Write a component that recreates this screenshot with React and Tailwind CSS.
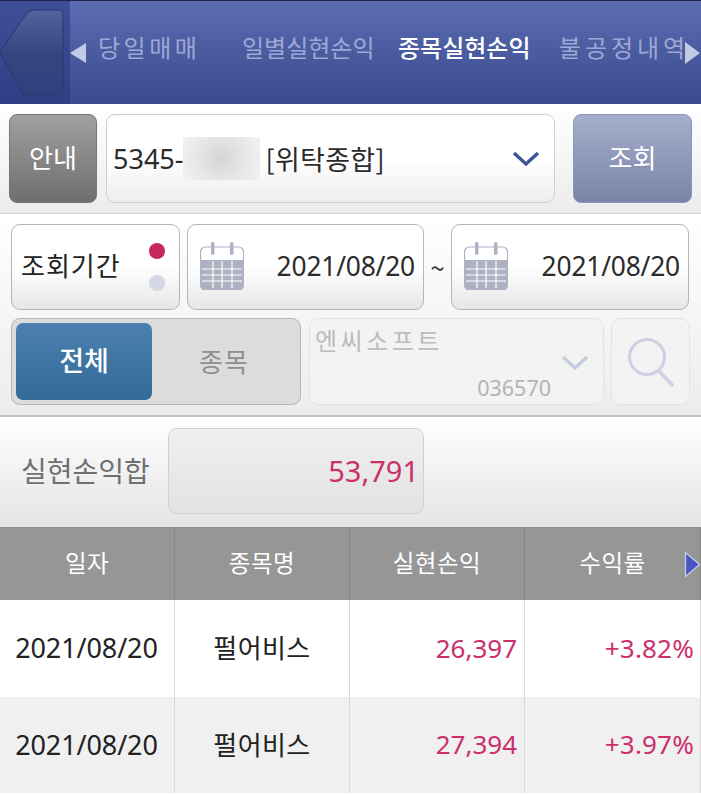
const KR = { fontFamily: '"Noto Sans CJK KR", "Noto Sans", sans-serif' };
const LATIN = { fontFamily: '"Noto Sans", sans-serif' };

function Calendar() {
  return (
    <svg width="44" height="48" viewBox="0 0 44 48" className="shrink-0">
      <rect x="0.5" y="5" width="43" height="43" rx="5" fill="#fff" stroke="#aeb1c1" strokeWidth="1.2" />
      <path d="M0 18V43a5 5 0 0 0 5 5H39a5 5 0 0 0 5-5V18Z" fill="#aeb1c1" />
      <rect x="11" y="0" width="3.5" height="13" rx="1.7" fill="#aeb1c1" />
      <rect x="30" y="0" width="3.5" height="13" rx="1.7" fill="#aeb1c1" />
      <path d="M2 27H42M2 33H42M2 39H42M13 19V46M22 19V46M32 19V46" stroke="#fff" strokeWidth="1.2" />
    </svg>
  );
}

function DateBox({ w }) {
  return (
    <div className={`${w} h-[86px] rounded-[9px] border border-[#b5b5b5] bg-gradient-to-b from-white via-white to-[#e6e6e6] flex items-center pl-[12px] pr-[8px] justify-between pb-[2px]`}>
      <Calendar />
      <span className="text-[26.4px] leading-none text-[#2b2b2b] tracking-[-0.2px]" style={LATIN}>2021/08/20</span>
    </div>
  );
}

function Chevron({ color, w = 28, h = 16 }) {
  return (
    <svg width={w} height={h} viewBox="0 0 28 16">
      <path d="M2 2L14 13L26 2" fill="none" stroke={color} strokeWidth="3.4" />
    </svg>
  );
}

function Row({ bg, date, name, amount, rate }) {
  const cell = "h-full flex items-center border-r border-[#d9d9d9]";
  return (
    <div className={`grid grid-cols-[175px_175px_175px_176px] h-[96.5px] ${bg}`}>
      <div className={`${cell} justify-center text-[#222] text-[27px] tracking-[-0.1px] pr-[1px]`} style={LATIN}>{date}</div>
      <div className={`${cell} justify-center text-[#222] text-[26px] tracking-[0.4px] pb-[3px]`} style={KR}>{name}</div>
      <div className={`${cell} justify-end pr-[7px] text-[#cb2f6c] text-[26px]`} style={LATIN}>{amount}</div>
      <div className={`${cell} justify-end pr-[6px] text-[#cb2f6c] text-[26px] tracking-[0.2px]`} style={LATIN}>{rate}</div>
    </div>
  );
}

export default function App() {
  return (
    <div className="w-[701px] h-[795px] overflow-hidden bg-white" style={KR}>
      {/* top tab bar */}
      <div className="relative h-[104px] flex border-t border-[#1d2340] bg-gradient-to-b from-[#5c6cb2] to-[#3a4a8e] overflow-hidden">
        <div className="w-[70px] shrink-0 bg-gradient-to-b from-[#3e4f98] to-[#2f3f86]">
          <svg width="70" height="103" viewBox="0 0 70 103">
            <defs>
              <linearGradient id="backGrad" x1="0" y1="0" x2="0" y2="1">
                <stop offset="0" stopColor="#52639f" />
                <stop offset="0.5" stopColor="#35467f" />
                <stop offset="1" stopColor="#2f3f7e" />
              </linearGradient>
            </defs>
            <path d="M0 51L27 12Q30 9 34 9H58Q63 9 63 14V90Q63 95 58 95H27Q24 95 22 92Z" fill="url(#backGrad)" stroke="#293672" strokeWidth="1" />
          </svg>
        </div>
        <div className="flex items-center whitespace-nowrap text-[24px] leading-none pb-[11px] text-[#9ea8d4]">
          <span className="ml-[28px] w-[102px] text-center tracking-[3.5px]">당일매매</span>
          <span className="ml-[42px] w-[130px] text-center">일별실현손익</span>
          <span className="ml-[26px] w-[130px] text-center text-white font-medium">종목실현손익</span>
          <span className="ml-[30px] w-[132px] text-center tracking-[4px]">불공정내역</span>
        </div>
        <svg className="absolute left-[70px] top-[41px]" width="18" height="22" viewBox="0 0 18 22"><path d="M0 11L16 1V21Z" fill="#c3cae6" /></svg>
        <svg className="absolute left-[684px] top-[41px]" width="17" height="22" viewBox="0 0 17 22"><path d="M16 11L1 0V22Z" fill="#c3cae6" /></svg>
      </div>

      {/* account row */}
      <div className="h-[110px] flex items-start pt-[10px] pl-[9px] gap-[9px] bg-gradient-to-b from-white to-[#ececec] border-b border-[#d0d0d0]">
        <div className="w-[88px] h-[89px] rounded-[8px] border border-[#777] bg-gradient-to-b from-[#a0a0a0] to-[#6f6f6f] flex items-center justify-center text-white text-[26px] pb-[4px]">안내</div>
        <div className="w-[449px] h-[89px] rounded-[9px] border border-[#cfcfcf] bg-gradient-to-b from-white via-white to-[#ededed] flex items-center pl-[6px] pr-[14px]">
          <span className="text-[27px] leading-none text-[#2b2b2b]" style={LATIN}>5345-</span>
          <span className="w-[77px] h-[43px] mr-[5px] bg-[radial-gradient(circle,#d6d6d6_0%,#e8e8e8_60%,#f2f2f2_100%)]" />
          <span className="text-[27px] leading-none text-[#2b2b2b] tracking-[0.3px]">[위탁종합]</span>
          <span className="ml-auto"><Chevron color="#3f5598" /></span>
        </div>
        <div className="ml-[9px] w-[119px] h-[89px] rounded-[8px] border border-[#8d96b8] bg-gradient-to-b from-[#a5aeca] to-[#7b84a8] flex items-center justify-center text-white text-[26px] pb-[4px]">조회</div>
      </div>

      {/* search filters */}
      <div className="h-[203px] pt-[10px] pl-[11px] flex flex-col gap-[8px] bg-gradient-to-b from-white to-[#ececec] border-b-2 border-[#c4c4c4]">
        <div className="flex items-center">
          <div className="w-[169px] h-[86px] rounded-[9px] border border-[#b5b5b5] bg-gradient-to-b from-white via-white to-[#e6e6e6] flex items-center justify-between pl-[9px] pr-[14px]">
            <span className="text-[26px] text-[#222] leading-none tracking-[1px] pb-[4px] whitespace-nowrap">조회기간</span>
            <div className="flex flex-col gap-[16px]">
              <span className="w-[16px] h-[16px] rounded-full bg-[#c8245f]" />
              <span className="w-[16px] h-[16px] rounded-full bg-[#d3d8e4]" />
            </div>
          </div>
          <div className="ml-[7px]"><DateBox w="w-[237px]" /></div>
          <span className="w-[27px] text-center text-[#333] text-[26px] leading-none">~</span>
          <DateBox w="w-[238px]" />
        </div>
        <div className="flex items-center">
          <div className="w-[290px] h-[87px] rounded-[9px] border border-[#b5b5b5] bg-[#dcdcdc] p-[4px] flex items-stretch">
            <div className="w-[136px] rounded-[7px] bg-gradient-to-b from-[#4c80b0] to-[#316b97] flex items-center justify-center text-white text-[27px] font-medium pb-[2px]">전체</div>
            <div className="flex-1 flex items-center justify-center text-[#8e8e8e] text-[26px] tracking-[1px] pb-[2px]">종목</div>
          </div>
          <div className="ml-[8px] w-[295px] h-[87px] rounded-[9px] border border-[#e4e4e4] bg-[#f3f3f3] relative">
            <span className="absolute left-[5px] top-[9px] text-[24px] leading-none text-[#bcbcbc] tracking-[3.5px] whitespace-nowrap">엔씨소프트</span>
            <span className="absolute right-[52px] bottom-[6px] text-[21.5px] leading-none text-[#b4b4b4]" style={LATIN}>036570</span>
            <span className="absolute right-[14px] top-[36px]"><Chevron color="#c6cce0" /></span>
          </div>
          <div className="ml-[7px] w-[79px] h-[87px] rounded-[9px] border border-[#e4e4e4] bg-[#f3f3f3] flex items-center justify-center">
            <svg width="50" height="52" viewBox="0 0 50 52">
              <circle cx="21" cy="21" r="17.5" fill="none" stroke="#ccd0e2" strokeWidth="3" />
              <path d="M33 35L47 50" stroke="#ccd0e2" strokeWidth="3.4" />
            </svg>
          </div>
        </div>
      </div>

      {/* total */}
      <div className="h-[111px] flex items-start pt-[11px] bg-gradient-to-b from-white to-[#e4e4e4] border-b border-[#8c8c8c]">
        <span className="ml-[21px] w-[147px] h-[86px] flex items-center text-[#6f6f6f] text-[28px] leading-none whitespace-nowrap pb-[2px]">실현손익합</span>
        <div className="w-[256px] h-[86px] rounded-[9px] border border-[#d0d0d0] bg-gradient-to-b from-[#f0f0f0] to-[#e2e2e2] flex items-center justify-end pr-[4px] text-[#cb2f6c] text-[29px]" style={LATIN}>53,791</div>
      </div>

      {/* table */}
      <div className="relative grid grid-cols-[175px_175px_175px_176px] h-[72px] bg-[#969696] text-white text-[23.5px] leading-none">
        {["일자", "종목명", "실현손익", "수익률"].map((t) => (
          <div key={t} className="flex items-center justify-center border-r border-[#858585] tracking-[0.5px] pb-[2px]">{t}</div>
        ))}
        <svg className="absolute left-[684px] top-[23px]" width="17" height="27" viewBox="0 0 17 27">
          <path d="M1.5 1.5L15.5 13.5L1.5 25.5Z" fill="#4a53c0" stroke="#c5c9e4" strokeWidth="1.4" strokeLinejoin="round" />
        </svg>
      </div>
      <Row bg="bg-white" date="2021/08/20" name="펄어비스" amount="26,397" rate="+3.82%" />
      <Row bg="bg-[#f0f0f1]" date="2021/08/20" name="펄어비스" amount="27,394" rate="+3.97%" />
    </div>
  );
}
